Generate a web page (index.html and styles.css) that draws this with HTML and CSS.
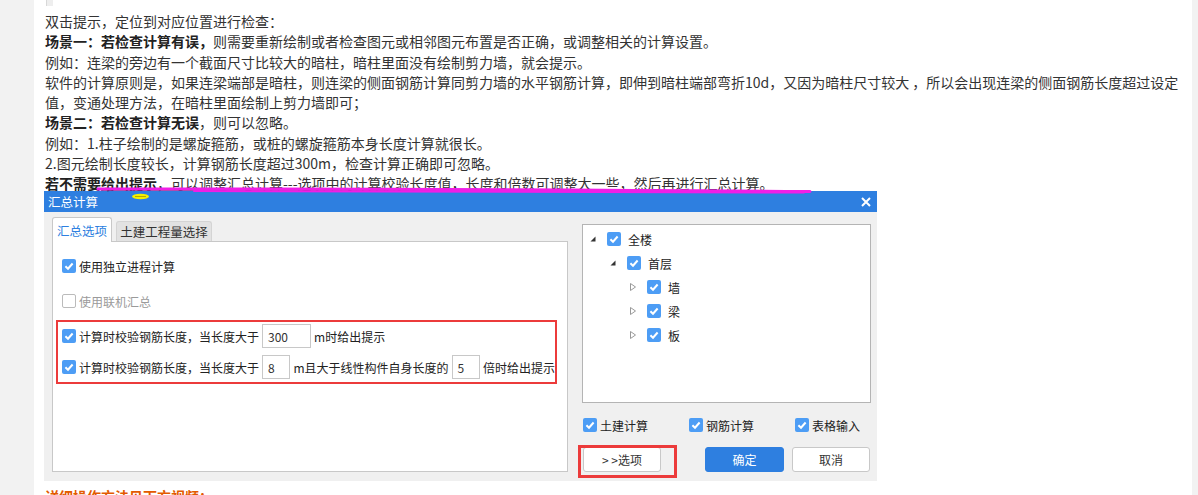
FILE: index.html
```html
<!DOCTYPE html>
<html lang="zh-CN">

<head>
    <meta charset="UTF-8">
    <meta name="viewport" content="width=device-width, initial-scale=1.0">
    <title>汇总计算提示</title>
    <link rel="stylesheet" href="styles.css">
</head>

<body>

    <div class="page">
        <div class="edge"></div>

        <div class="article">
            <p>双击提示，定位到对应位置进行检查：</p>
            <p><b>场景一：若检查计算有误，</b>则需要重新绘制或者检查图元或相邻图元布置是否正确，或调整相关的计算设置。</p>
            <p>例如：连梁的旁边有一个截面尺寸比较大的暗柱，暗柱里面没有绘制剪力墙，就会提示。</p>
            <p>软件的计算原则是，如果连梁端部是暗柱，则连梁的侧面钢筋计算同剪力墙的水平钢筋计算，即伸到暗柱端部弯折10d，又因为暗柱尺寸较大 ，所以会出现连梁的侧面钢筋长度超过设定<br>值，变通处理方法，在暗柱里面绘制上剪力墙即可；</p>
            <p><b>场景二：若检查计算无误</b>，则可以忽略。</p>
            <p>例如：1.柱子绘制的是螺旋箍筋，或桩的螺旋箍筋本身长度计算就很长。</p>
            <p>2.图元绘制长度较长，计算钢筋长度超过300m，检查计算正确即可忽略。</p>
            <p><b>若不需要<u>给出提示</u></b><u>，可以调整汇总计算---选项中的计算校验长度值，长度和倍数可调整大一些，然后再进行汇总计算。</u></p>
        </div>

        <div class="dialog">
            <div class="dialog-title">
                <span>汇总计算</span>
                <svg class="close" width="10" height="10" viewBox="0 0 10 10">
                    <path d="M1 1 L9 9 M9 1 L1 9" stroke="#fff" stroke-width="2" />
                </svg>
            </div>
            <div class="dialog-body">
                <div class="main">
                    <div class="tabs">
                        <div class="tab active">汇总选项</div>
                        <div class="tab">土建工程量选择</div>
                    </div>
                    <div class="panel">
                        <label class="opt"><span class="cb"></span>使用独立进程计算</label>
                        <label class="opt disabled"><span class="cb off"></span>使用联机汇总</label>
                        <div class="mark">
                            <label class="opt tall"><span class="cb"></span>计算时校验钢筋长度，当长度大于<span class="field wide">300</span>m时给出提示</label>
                            <label class="opt tall gap"><span class="cb"></span>计算时校验钢筋长度，当长度大于<span class="field">8</span>m且大于线性构件自身长度的<span class="field">5</span>倍时给出提示</label>
                        </div>
                    </div>
                </div>

                <div class="side">
                    <div class="tree">
                        <div class="node"><span class="twist"><svg width="6" height="6" viewBox="0 0 6 6"><path d="M5.5 0.5 L5.5 5.5 L0.5 5.5 Z" fill="#333" /></svg></span><span class="cb"></span>全楼</div>
                        <div class="node l1"><span class="twist"><svg width="6" height="6" viewBox="0 0 6 6"><path d="M5.5 0.5 L5.5 5.5 L0.5 5.5 Z" fill="#333" /></svg></span><span class="cb"></span>首层</div>
                        <div class="node l2"><span class="twist"><svg width="6" height="8" viewBox="0 0 6 8"><path d="M0.5 0.5 L5.5 4 L0.5 7.5 Z" fill="none" stroke="#999" /></svg></span><span class="cb"></span>墙</div>
                        <div class="node l2"><span class="twist"><svg width="6" height="8" viewBox="0 0 6 8"><path d="M0.5 0.5 L5.5 4 L0.5 7.5 Z" fill="none" stroke="#999" /></svg></span><span class="cb"></span>梁</div>
                        <div class="node l2"><span class="twist"><svg width="6" height="8" viewBox="0 0 6 8"><path d="M0.5 0.5 L5.5 4 L0.5 7.5 Z" fill="none" stroke="#999" /></svg></span><span class="cb"></span>板</div>
                    </div>
                    <div class="checks">
                        <label class="check"><span class="cb"></span>土建计算</label>
                        <label class="check"><span class="cb"></span>钢筋计算</label>
                        <label class="check last"><span class="cb"></span>表格输入</label>
                    </div>
                    <div class="actions">
                        <span class="circled"><button class="btn">&gt; &gt;选项</button></span>
                        <button class="btn primary ok">确定</button>
                        <button class="btn cancel">取消</button>
                    </div>
                </div>
            </div>
        </div>

        <p class="note">详细操作方法见下方视频：</p>

        <svg class="scribbles" width="1158" height="495" viewBox="0 0 1158 495">
            <path d="M64 189 Q 400 188.5 776 191.5" stroke="#f01ee6" stroke-width="3" fill="none" stroke-linecap="round" />
            <path d="M160 191 Q 450 190.5 770 192.5" stroke="#f01ee6" stroke-width="2" fill="none" stroke-linecap="round" />
            <ellipse cx="106.5" cy="196.5" rx="8.5" ry="2.8" fill="#f4f000" />
            <path d="M101 196.5 L112 196.5" stroke="#b8a800" stroke-width="1" />
        </svg>
    </div>

</body>

</html>
```

FILE: styles.css
```css
/* Basic Reset */
* {
    box-sizing: border-box;
}

body {
    margin: 0;
    background-color: #f2f2f2;
    font-family: "Noto Sans CJK SC", "Noto Sans", sans-serif;
}

.page {
    position: relative;
    margin-left: 34px;
    width: 1158px;
    height: 495px;
    overflow: hidden;
    padding-left: 11px;
    background-color: #fff;
}

.edge {
    width: 7px;
    height: 6px;
    margin-left: 1px;
    background-color: #eee;
    border-left: 1px solid #d8d8d8;
}

/* article text */
.article {
    padding-top: 5px;
}

.article p {
    margin: 0;
    font-size: 14px;
    line-height: 20.25px;
    color: #333;
    white-space: nowrap;
}

.article b {
    color: #222;
}

.article u {
    text-decoration-color: #777;
}

/* dialog */
.dialog {
    width: 833px;
    margin: -2px 0 0 -1px;
    font-size: 12px;
    color: #222;
}

.dialog-title {
    display: flex;
    justify-content: space-between;
    align-items: center;
    height: 21px;
    padding: 0 6px 0 4px;
    background-color: #2e7fe0;
    color: #fff;
    font-size: 12.5px;
}

.dialog-body {
    display: flex;
    align-items: flex-start;
    height: 269px;
    padding: 5px 6px 0 8px;
    background-color: #f0f0f0;
}

.main {
    width: 516px;
}

.tabs {
    display: flex;
    align-items: flex-end;
    height: 24px;
}

.tab {
    display: flex;
    justify-content: center;
    align-items: center;
    width: 96px;
    height: 20px;
    margin-left: 4px;
    background-color: #e2e2e2;
    border: 1px solid #d4d4d4;
    border-bottom: none;
    border-radius: 3px 3px 0 0;
    color: #333;
    font-size: 12.5px;
}

.tab.active {
    position: relative;
    z-index: 1;
    width: 60px;
    height: 25px;
    margin: 0 0 -1px 0;
    background-color: #fff;
    border-color: #c8c8c8;
    color: #2e7fe0;
}

.panel {
    height: 231px;
    padding: 14px 10px 0 3px;
    background-color: #fff;
    border: 1px solid #c8c8c8;
}

.opt {
    display: flex;
    align-items: center;
    height: 20px;
    padding-left: 6px;
    white-space: nowrap;
}

.opt + .opt {
    margin-top: 15px;
}

.opt.disabled {
    color: #9a9a9a;
}

.mark {
    margin-top: 9px;
    padding: 2px 0 3px 4px;
    border: 2px solid #ec3b3b;
}

.mark .opt {
    padding-left: 0;
}

.opt.tall {
    height: 24px;
}

.opt.gap {
    margin-top: 7px;
}

.field {
    display: inline-flex;
    align-items: center;
    width: 29px;
    height: 24px;
    margin: 0 3px;
    padding-left: 5px;
    background-color: #fff;
    border: 1px solid #c8c8c8;
    color: #333;
}

.field.wide {
    width: 49px;
}

/* checkbox */
.cb {
    display: inline-block;
    flex-shrink: 0;
    width: 14px;
    height: 14px;
    margin-right: 3px;
    border-radius: 2px;
    background-color: #4d9df5;
    background-image: url("data:image/svg+xml,%3Csvg xmlns='http://www.w3.org/2000/svg' viewBox='0 0 14 14'%3E%3Cpath d='M3.4 7.2 L6 9.7 L10.6 4.5' stroke='white' stroke-width='2' fill='none'/%3E%3C/svg%3E");
}

.cb.off {
    background: #fff;
    border: 1px solid #bbb;
}

/* right side */
.side {
    width: 289px;
    margin-left: 14px;
    padding-top: 7px;
}

.tree {
    height: 179px;
    padding-top: 2px;
    background-color: #fff;
    border: 1px solid #b4b4b4;
}

.node {
    display: flex;
    align-items: center;
    height: 24px;
    padding-left: 7px;
}

.node.l1 {
    padding-left: 27px;
}

.node.l2 {
    padding-left: 47px;
}

.twist {
    display: flex;
    align-items: center;
    width: 17px;
}

.node .cb {
    margin-right: 7px;
}

.checks {
    display: flex;
    align-items: center;
    height: 20px;
    margin-top: 12px;
    padding-left: 1px;
}

.check {
    display: flex;
    flex-shrink: 0;
    align-items: center;
    width: 106px;
    white-space: nowrap;
}

.check.last {
    width: auto;
}

.actions {
    display: flex;
    margin-top: 12px;
    padding-left: 1px;
}

.btn {
    width: 78px;
    height: 25px;
    padding: 0;
    background-color: #fff;
    border: 1px solid #c8c8c8;
    border-radius: 3px;
    font-family: inherit;
    font-size: 12px;
    color: #333;
}

.btn.primary {
    background-color: #2e7fe0;
    border-color: #2e7fe0;
    color: #fff;
}

.btn.ok {
    width: 79px;
    margin-left: 44px;
}

.btn.cancel {
    margin-left: 8px;
}

.circled {
    position: relative;
    display: flex;
}

.circled::after {
    content: "";
    position: absolute;
    top: -2px;
    left: -5px;
    right: -16px;
    bottom: -6px;
    border: 3px solid #ec3b3b;
}

.note {
    margin: 5px 0 0;
    font-size: 14px;
    line-height: 20px;
    font-weight: bold;
    color: #e35a00;
}

/* hand drawn marks on the screenshot */
.scribbles {
    position: absolute;
    top: 0;
    left: 0;
    pointer-events: none;
}
```
